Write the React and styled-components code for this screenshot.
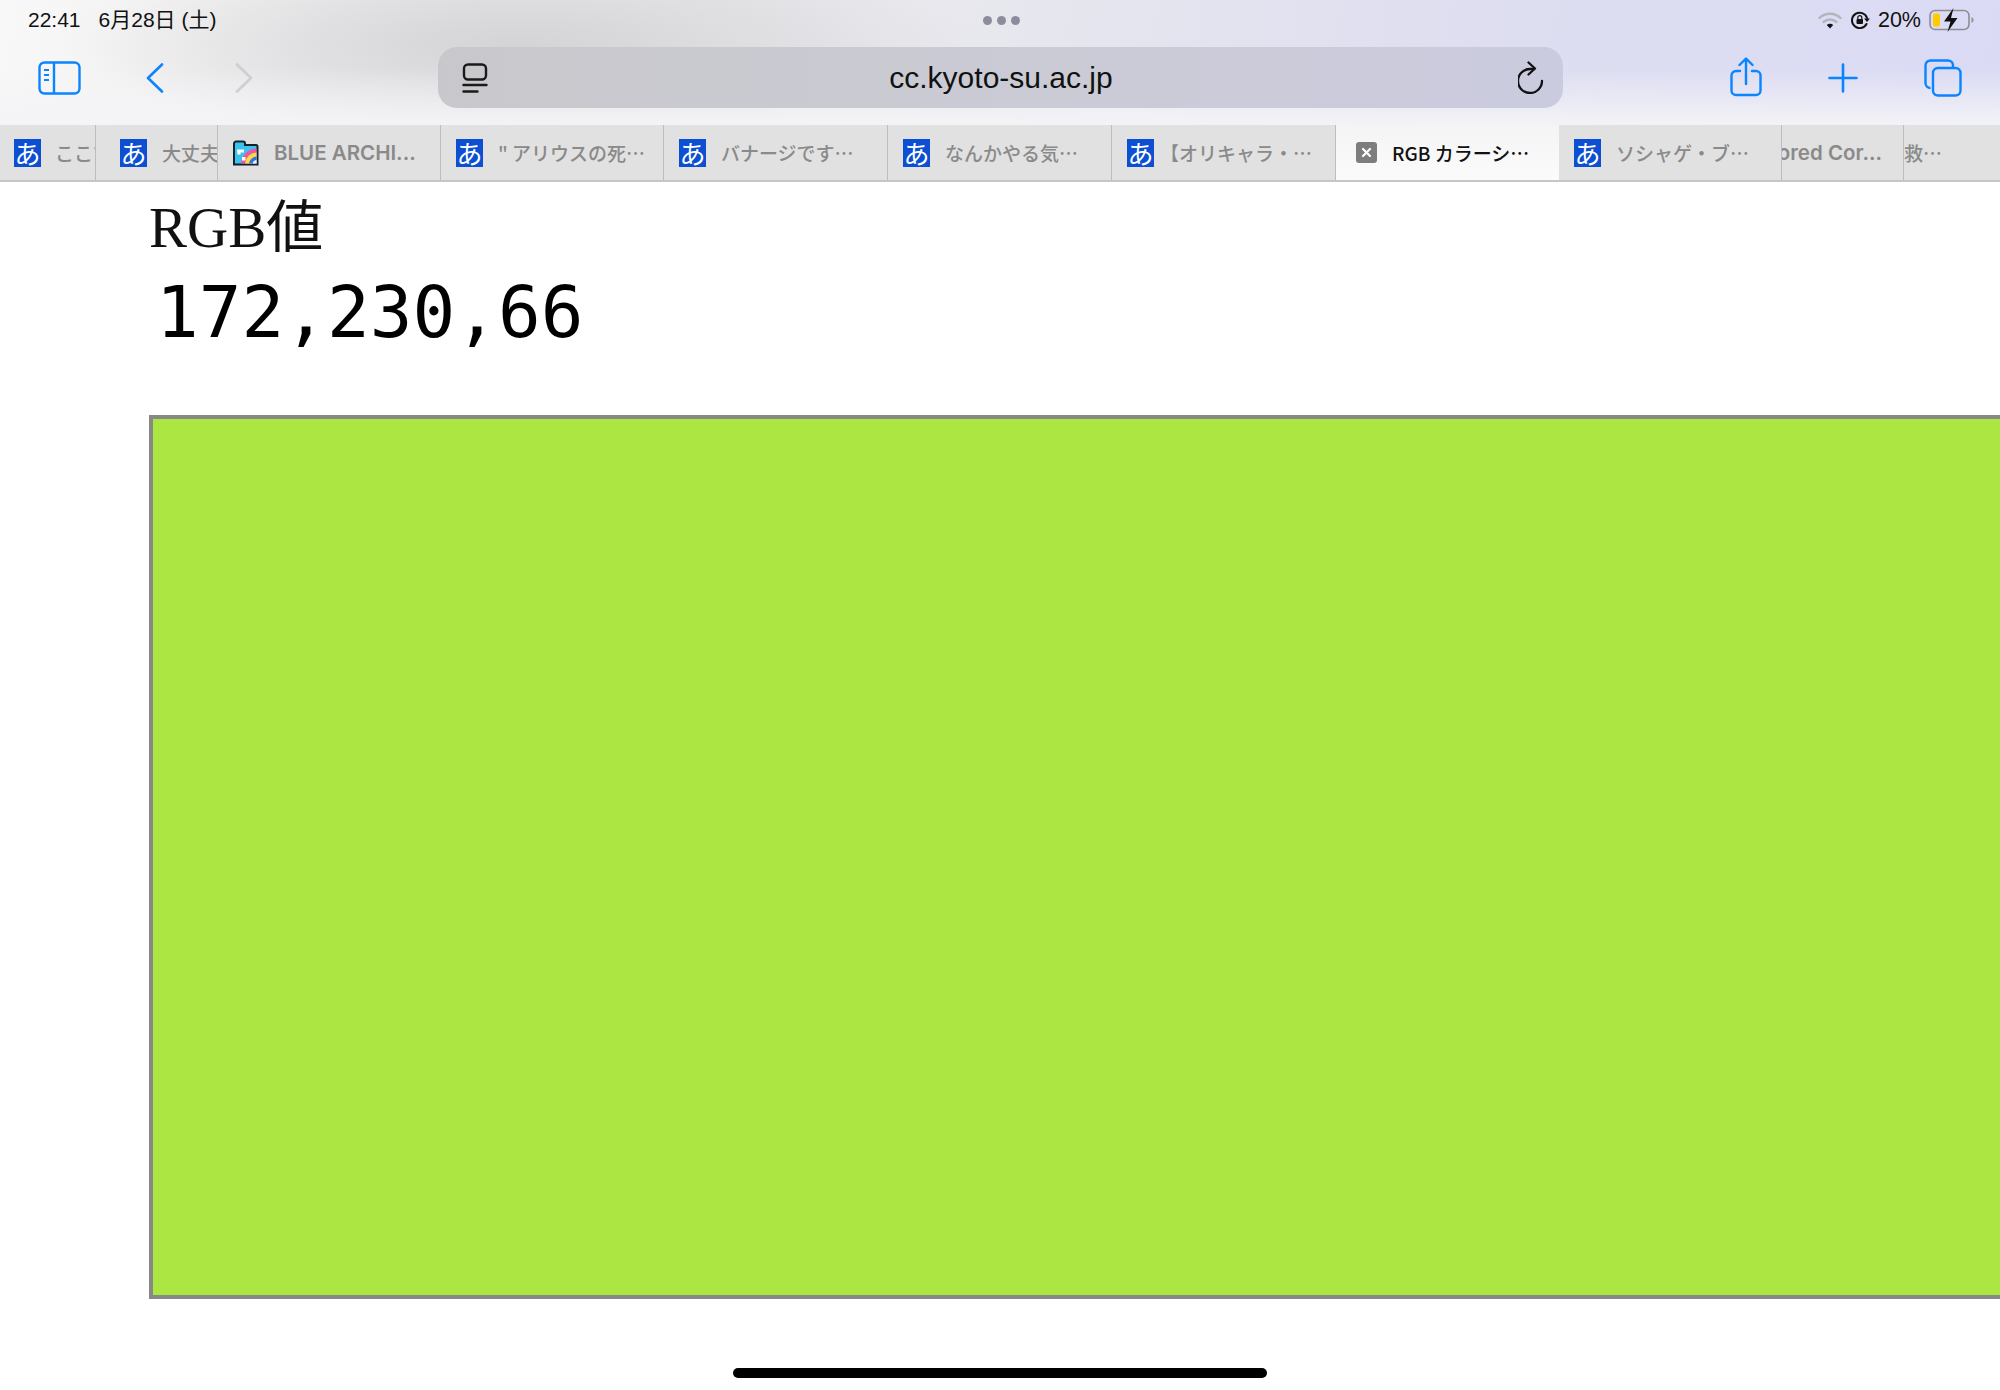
import React from 'react';
import styled, { createGlobalStyle } from 'styled-components';

const GlobalStyle = createGlobalStyle`
    html, body {
        margin: 0;
        padding: 0;
        background: white;
    }
    #root {
        width: 2000px;
        height: 1390px;
        overflow: hidden;
    }
`;

const UI_FONT = `"Liberation Sans", "Noto Sans CJK JP", sans-serif`;
const BLUE = '#0a84ff';

const Screen = styled.div`
    width: 2000px;
    height: 1390px;
    display: flex;
    flex-direction: column;
    overflow: hidden;
    font-family: ${UI_FONT};
`;

const Chrome = styled.header`
    height: 125px;
    flex: none;
    display: flex;
    flex-direction: column;
    background:
        linear-gradient(180deg, rgba(244,244,247,0) 55%, rgba(244,244,247,0.95) 100%),
        radial-gradient(ellipse 460px 100px at 520px 45px, #d4d4d7 0%, rgba(212,212,215,0) 100%),
        linear-gradient(100deg, #f8f8f8 0%, #e9e9ea 25%, #e9e9ee 45%, #dfdff0 70%, #dadaf5 100%);
`;

const StatusBar = styled.div`
    height: 40px;
    display: grid;
    grid-template-columns: 1fr auto 1fr;
    align-items: center;
    padding: 0 26px 0 28px;
`;

const StatusLeft = styled.div`
    display: flex;
    align-items: baseline;
    gap: 18px;
    font-size: 21px;
    line-height: 24px;
    color: #111;
`;

const Dots = styled.div`
    display: flex;
    gap: 5px;
`;

const Dot = styled.span`
    width: 9px;
    height: 9px;
    border-radius: 50%;
    background: #8c8c9c;
`;

const StatusRight = styled.div`
    display: flex;
    align-items: center;
    justify-content: flex-end;
    font-size: 21.5px;
    color: #111;
`;

const Percent = styled.span`
    margin: 0 8px;
`;

const Toolbar = styled.div`
    height: 85px;
    display: flex;
    align-items: flex-start;
    padding-left: 38px;
`;

const ToolIcon = styled.svg`
    flex: none;
    display: block;
    margin-top: ${props => props.$top}px;
    margin-left: ${props => props.$left || 0}px;
`;

const AddressBar = styled.div`
    width: 1125px;
    height: 61px;
    margin: 7px 0 0 185px;
    flex: none;
    display: grid;
    grid-template-columns: 1fr auto 1fr;
    align-items: center;
    padding: 0 19px 0 24px;
    box-sizing: border-box;
    border-radius: 19px;
    background: linear-gradient(90deg, #c8c8cc 0%, #cbcbd6 55%, #cbcbdf 100%);
`;

const AddressEnd = styled.div`
    display: flex;
    justify-content: flex-end;
`;

const Url = styled.span`
    font-size: 30px;
    color: #111;
    transform: translateX(-2px);
`;

const TabBar = styled.nav`
    height: 57px;
    flex: none;
    display: flex;
    box-sizing: border-box;
    border-bottom: 2px solid #c6c6c6;
    background: #e1e1e1;
`;

const Tab = styled.div`
    width: ${props => props.$width}px;
    flex: none;
    display: flex;
    align-items: center;
    justify-content: ${props => (props.$clipLeft ? 'flex-end' : 'flex-start')};
    gap: ${props => props.$gap || 15}px;
    box-sizing: border-box;
    padding: ${props => (props.$clipLeft ? '0 21px 0 0' : `0 0 0 ${props.$pad ?? 15}px`)};
    overflow: hidden;
    white-space: nowrap;
    font-family: ${props => (props.$latin ? 'Inter, sans-serif' : '"Noto Sans CJK JP", sans-serif')};
    font-size: ${props => (props.$latin ? 20.5 : 19)}px;
    font-weight: ${props => (props.$latin ? 600 : 500)};
    color: ${props => (props.$active ? '#111' : '#8a8a8a')};
    background: ${props => (props.$active ? 'linear-gradient(180deg, #f4f4f4, #fbfbfb)' : 'none')};
    border-right: 1px solid ${props => (props.$active || props.$noLine ? 'transparent' : '#bdbdbd')};
`;

const Favicon = styled.span`
    width: 27px;
    height: 28px;
    flex: none;
    display: flex;
    align-items: center;
    justify-content: center;
    background: #0c4fd2;
    color: white;
    font-family: "Noto Sans CJK JP", sans-serif;
    font-weight: 400;
    font-size: 26px;
    line-height: 28px;
`;

const Content = styled.main`
    flex: none;
    display: flex;
    flex-direction: column;
    padding-left: 149px;
`;

const Title = styled.h1`
    margin: 8px 0 0;
    height: 75px;
    font-family: "Liberation Serif", "Noto Sans CJK JP", serif;
    font-weight: 400;
    font-size: 57px;
    line-height: 75px;
    color: #111;
`;

const Value = styled.div`
    margin: 6px 0 0 7px;
    height: 84px;
    font-family: "DejaVu Sans Mono", monospace;
    font-size: 71px;
    line-height: 84px;
    color: #000;
`;

const Swatch = styled.div`
    margin-top: 60px;
    width: 1860px;
    height: 884px;
    flex: none;
    box-sizing: border-box;
    border: 4px solid #888;
    background: rgb(172, 230, 66);
`;

const HomeBar = styled.div`
    flex: none;
    align-self: center;
    margin-top: 69px;
    width: 534px;
    height: 10px;
    border-radius: 5px;
    background: #000;
`;

const SidebarIcon = () => (
    <ToolIcon $top={21} width="43" height="34" viewBox="0 0 43 34" fill="none" stroke={BLUE} strokeWidth="2.4">
        <rect x="1.5" y="1.5" width="40" height="31" rx="5" />
        <path d="M16 2v30" />
        <path d="M6 9h5M6 14h5M6 19h5" strokeWidth="2" />
    </ToolIcon>
);

const Chevron = ({ left, color, flip }) => (
    <ToolIcon $top={23} $left={left} width="18" height="30" viewBox="0 0 18 30" fill="none" stroke={color} strokeWidth="2.6" strokeLinecap="round" strokeLinejoin="round">
        <path d={flip ? 'M2 1.5 16 15 2 28.5' : 'M16 1.5 2 15l14 13.5'} />
    </ToolIcon>
);

const ReaderIcon = () => (
    <svg width="26" height="30" viewBox="0 0 26 30" fill="none" stroke="#1a1a1a" strokeWidth="2.4" strokeLinecap="round">
        <rect x="2" y="1.5" width="22" height="15" rx="4" />
        <path d="M1.5 22h23M1.5 28.5h14" />
    </svg>
);

const ReloadIcon = () => (
    <svg width="26" height="33" viewBox="0 0 26 33" fill="none" stroke="#111" strokeWidth="2.3" strokeLinecap="round" strokeLinejoin="round">
        <path d="M24 20A12 12 0 1 1 12 8h4" />
        <path d="M10.5 1.5 17 7.5l-6.5 6" />
    </svg>
);

const ShareIcon = () => (
    <ToolIcon $top={17} $left={167} width="32" height="40" viewBox="0 0 32 40" fill="none" stroke={BLUE} strokeWidth="2.4" strokeLinecap="round" strokeLinejoin="round">
        <path d="M10 14H6a4.5 4.5 0 0 0-4.5 4.5v15A4.5 4.5 0 0 0 6 38h20a4.5 4.5 0 0 0 4.5-4.5v-15A4.5 4.5 0 0 0 26 14h-4" />
        <path d="M16 27V2M9.5 8 16 1.5 22.5 8" />
    </ToolIcon>
);

const PlusIcon = () => (
    <ToolIcon $top={23} $left={66} width="30" height="30" viewBox="0 0 30 30" fill="none" stroke={BLUE} strokeWidth="2.6" strokeLinecap="round">
        <path d="M15 1.5v27M1.5 15h27" />
    </ToolIcon>
);

const TabsIcon = () => (
    <ToolIcon $top={19} $left={66} width="38" height="38" viewBox="0 0 38 38" fill="none" stroke={BLUE} strokeWidth="2.4">
        <path d="M6 29H6.5A5 5 0 0 1 1.5 24V6.5A5 5 0 0 1 6.5 1.5H24A5 5 0 0 1 29 6.5V9" />
        <rect x="9" y="9" width="27.5" height="27.5" rx="5" />
    </ToolIcon>
);

const WifiIcon = () => (
    <svg width="24" height="17" viewBox="0 0 24 17" fill="none" strokeLinecap="round" style={{ marginRight: 9 }}>
        <path d="M1.5 6a15 15 0 0 1 21 0" stroke="#b4b4bc" strokeWidth="2.4" />
        <path d="M5.5 10a9.5 9.5 0 0 1 13 0" stroke="#b4b4bc" strokeWidth="2.4" />
        <path d="M12 16.5 8.8 13a4.6 4.6 0 0 1 6.4 0z" fill="#111" />
    </svg>
);

const RotationLockIcon = () => (
    <svg width="19" height="18" viewBox="0 0 19 18" fill="none">
        <path d="M15.5 13A7.7 7.7 0 1 1 16 7" stroke="#111" strokeWidth="2" strokeLinecap="round" />
        <path d="M13 7.5h6l-3 3.5z" fill="#111" />
        <rect x="5.5" y="8" width="6.5" height="5" rx="1" fill="#111" />
        <path d="M6.8 8.5V6.6a2 2 0 0 1 4 0v1.9" stroke="#111" strokeWidth="1.2" />
    </svg>
);

const BatteryIcon = () => (
    <svg width="45" height="24" viewBox="0 0 45 24" fill="none">
        <rect x="1" y="2.5" width="39" height="19" rx="5" stroke="#8e8e92" strokeWidth="1.6" />
        <rect x="4" y="5.5" width="7" height="13" rx="2" fill="#ffcc00" />
        <path d="M42.5 9v6a3.2 3.2 0 0 0 0-6z" fill="#8e8e92" />
        <path d="M24.5 0 15 13.5h6.5L18.5 24l10-14h-6.5z" fill="#111" />
    </svg>
);

const ClosedFavicon = () => (
    <svg width="21" height="21" viewBox="0 0 21 21">
        <rect width="21" height="21" rx="3" fill="#7d7d7d" />
        <path d="m7 7 7 7M14 7l-7 7" stroke="white" strokeWidth="2.2" strokeLinecap="round" />
    </svg>
);

const ArchiveFavicon = () => (
    <svg width="27" height="26" viewBox="0 0 27 26">
        <path d="M2 5V3.5A2 2 0 0 1 4 1.5h7a2 2 0 0 1 2 2V5h11a1.5 1.5 0 0 1 1.5 1.5V24.5H2z" fill="#39c3ee" stroke="#14232b" strokeWidth="2" />
        <path d="M24.5 8.5A16 16 0 0 0 9 23.5h15.5z" fill="#f2559d" />
        <path d="M24.5 12.5A12 12 0 0 0 13 23.5h11.5z" fill="#f6dc45" />
        <path d="M24.5 16.5A8 8 0 0 0 17 23.5h7.5z" fill="#3a6fe0" />
        <path d="M24.5 20A4.5 4.5 0 0 0 20.5 23.5h4z" fill="#dff4fb" />
        <path d="M5 9.5h7v3H8.5v2h-3zM10 17h3.5v3.5H10z" fill="white" />
    </svg>
);

const tabs = [
    { width: 96, title: 'ここで', gap: 14, pad: 14 },
    { width: 122, title: '大丈夫です', pad: 24 },
    { width: 223, title: 'BLUE ARCHI...', icon: 'archive', pad: 14, latin: true },
    { width: 223, title: '" アリウスの死…' },
    { width: 224, title: 'バナージです…' },
    { width: 224, title: 'なんかやる気…' },
    { width: 224, title: '【オリキャラ・…', gap: 6 },
    { width: 223, title: 'RGB カラーシ…', icon: 'closed', active: true, pad: 20 },
    { width: 223, title: 'ソシャゲ・ブ…' },
    { width: 122, title: 'Armored Cor...', clipLeft: true, icon: 'none', latin: true },
    { width: 96, title: '救…', icon: 'none', noLine: true, pad: 0 },
];

const renderFavicon = icon => {
    if (icon === 'archive') return <ArchiveFavicon />;
    if (icon === 'closed') return <ClosedFavicon />;
    if (icon === 'none') return null;
    return <Favicon>あ</Favicon>;
};

const App = () => (
    <React.Fragment>
        <GlobalStyle />
        <Screen>
            <Chrome>
                <StatusBar>
                    <StatusLeft>
                        <span>22:41</span>
                        <span>6月28日 (土)</span>
                    </StatusLeft>
                    <Dots>
                        <Dot />
                        <Dot />
                        <Dot />
                    </Dots>
                    <StatusRight>
                        <WifiIcon />
                        <RotationLockIcon />
                        <Percent>20%</Percent>
                        <BatteryIcon />
                    </StatusRight>
                </StatusBar>
                <Toolbar>
                    <SidebarIcon />
                    <Chevron left={65} color={BLUE} />
                    <Chevron left={71} color="#cfcfd2" flip />
                    <AddressBar>
                        <ReaderIcon />
                        <Url>cc.kyoto-su.ac.jp</Url>
                        <AddressEnd>
                            <ReloadIcon />
                        </AddressEnd>
                    </AddressBar>
                    <ShareIcon />
                    <PlusIcon />
                    <TabsIcon />
                </Toolbar>
            </Chrome>
            <TabBar>
                {tabs.map((tab, index) => (
                    <Tab
                        key={index}
                        $width={tab.width}
                        $gap={tab.gap}
                        $pad={tab.pad}
                        $active={tab.active}
                        $latin={tab.latin}
                        $clipLeft={tab.clipLeft}
                        $noLine={tab.noLine}
                    >
                        {renderFavicon(tab.icon)}
                        <span>{tab.title}</span>
                    </Tab>
                ))}
            </TabBar>
            <Content>
                <Title>RGB値</Title>
                <Value>172,230,66</Value>
                <Swatch />
            </Content>
            <HomeBar />
        </Screen>
    </React.Fragment>
);

export default App;
